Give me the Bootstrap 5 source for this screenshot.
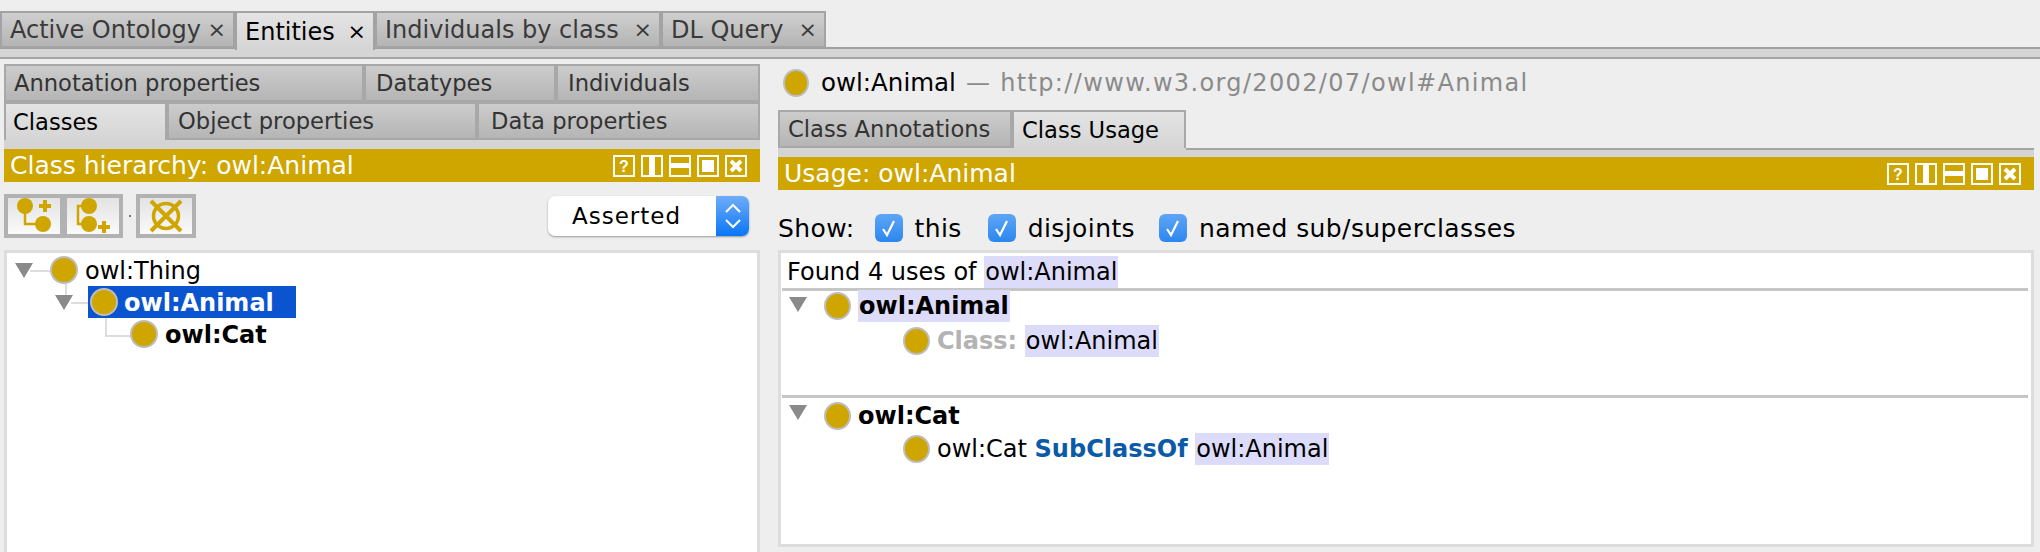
<!DOCTYPE html>
<html lang="en">
<head>
<meta charset="utf-8">
<title>Protege</title>
<link href="https://cdn.jsdelivr.net/npm/bootstrap@5.3.0/dist/css/bootstrap.min.css" rel="stylesheet">
<style>
html,body{height:552px;overflow:hidden}
body{background:#eee;font-family:"DejaVu Sans",sans-serif;color:#000;font-size:24px;line-height:1}
.app-top{padding-top:11px;height:59px;background:linear-gradient(#eee 47px,#a0a0a0 47px,#a0a0a0 49px,#d5d5d5 49px);border-bottom:2px solid #a5a5a5}
.app-tabs{height:37px}
.mtab{height:37px;border:2px solid #a3a3a3;background:linear-gradient(#cfcfcf,#b4b4b4);color:#3a3a3a;font-size:24px;padding-left:8px;display:flex;align-items:center;justify-content:space-between;padding-right:7px;position:relative;white-space:nowrap}
.mtab.on{background:linear-gradient(#e4e4e4,#d5d5d5);color:#000;border-bottom:0;height:39px}
.mtab span.xx{font-size:22px}
.w1{width:235px}.w2{width:140px}.w3{width:286px}.w4{width:165px}
.main-cols{padding:0 6px 0 4px;height:493px}
.left-pane{width:756px;padding-top:5px}
.right-pane{width:1256px;margin-left:18px}
.subrow{height:38px}
.stab{height:38px;border:2px solid #a8a8a8;background:linear-gradient(#cccccc,#b5b5b5);color:#333;font-size:22.6px;padding-left:8px;display:flex;align-items:center;white-space:nowrap}
.stab.on{background:linear-gradient(#e4e4e4,#d5d5d5);color:#000;border-bottom:0}
.s1{width:360px}.s2{width:192px;padding-left:10px}.s3{width:204px;padding-left:10px}.s4{width:163px;padding-left:7px}.s5{width:310px;padding-left:9px}.s6{width:283px;padding-left:12px}
.gap-band{height:9px;background:#d4d4d4}
.gold-bar{height:33px;background:#cfa500;color:#fff;font-size:25px;padding:0 13px 0 6px}
.tool-row{height:68px;padding:0 11px 0 0}
.tbtn{width:60px;height:44px;border:4px solid #b2b2b2;background:linear-gradient(#e3e3e3,#fafafa);display:flex;align-items:center;justify-content:center;padding:0}
.tbtn+.tbtn{margin-left:-1px}
.tdot{width:2px;height:2px;background:#777;margin:0 5px 0 6px;display:block}
.asserted{width:201px;height:40px;background:#fff;border-radius:7px;box-shadow:0 1px 2px #999;overflow:hidden;font-size:23px;letter-spacing:1px}
.asserted-txt{flex:1;text-align:center;padding-right:11px}
.stepper{width:33px;height:40px;background:linear-gradient(#6fadf8,#0a76f7)}
.box{background:#fff;border:3px solid #ddd;border-bottom:0}
.tree-box{height:302px;position:relative}
.tnode{position:absolute;display:flex;align-items:center}
.owl{width:28px;height:28px;border-radius:50%;background:#cfa500;border:2px solid #bdbdbd;flex:none;display:block}
.tri{width:0;height:0;border-left:9px solid transparent;border-right:9px solid transparent;border-top:15px solid #8a8a8a;position:absolute;display:block}
.wire{position:absolute;background:#ddd;display:block}
.lbl{margin-left:7px;white-space:nowrap;padding-top:2px}
.sel{background:#0b54d0;color:#fff}
.sel .lbl{margin-left:6px}
.b{font-weight:700}
.entity-head{height:51px;padding-bottom:3px;font-size:24.5px}
.entity-head .owl{width:26px;height:28px;margin-left:5px;margin-right:12px}
.muted-iri{color:#8a8a8a;letter-spacing:1.35px;font-size:24px;margin-left:10px}
.rtabs{height:38px}
.r1{width:234px}.r2{width:174px}
.rline{flex:1;border-bottom:2px solid #a5a5a5;height:40px}
.show-row{height:60px;font-size:25px;padding-top:16px;letter-spacing:.4px}
.chk{width:28px;height:28px;border-radius:6px;background:linear-gradient(#5ea6f5,#2d86ee);display:flex;align-items:center;justify-content:center;flex:none}
.chk-a{margin-left:20px}.chk-b{margin-left:26px}.chk-c{margin-left:24px}
.chk-t{margin-left:12px}
.use-box{height:297px;border-bottom:3px solid #ddd;position:relative;font-size:24px}
.hl{background:#dcdcfa;display:inline-block;height:32px;line-height:32px;padding:0 1px}
.rule{position:absolute;left:1px;right:3px;height:3px;background:#c6c6c6;display:block}
.rn{position:absolute;display:flex;align-items:center;height:32px;white-space:nowrap}
.rn .owl{margin-right:7px;width:27px}
.kw{color:#0a5aa8;font-weight:700}
.gry{color:#b3b3b3;font-weight:700}
</style>
</head>
<body>
<div class="app-top">
  <div class="d-flex app-tabs">
    <div class="mtab w1"><span>Active Ontology</span><span class="xx">×</span></div>
    <div class="mtab w2 on"><span>Entities</span><span class="xx">×</span></div>
    <div class="mtab w3"><span>Individuals by class</span><span class="xx">×</span></div>
    <div class="mtab w4"><span>DL Query</span><span class="xx">×</span></div>
  </div>
</div>
<div class="d-flex main-cols">
  <div class="left-pane">
    <div class="d-flex subrow"><div class="stab s1">Annotation properties</div><div class="stab s2">Datatypes</div><div class="stab s3">Individuals</div></div>
    <div class="d-flex subrow"><div class="stab s4 on">Classes</div><div class="stab s5">Object properties</div><div class="stab s6">Data properties</div></div>
    <div class="gap-band"></div>
    <div class="gold-bar d-flex align-items-center justify-content-between"><span>Class hierarchy: owl:Animal</span>
      <svg width="134" height="22" viewBox="0 0 134 22" fill="none" stroke="#fff" stroke-width="2"><rect x="1" y="1" width="20" height="20"/><text x="11" y="17" text-anchor="middle" fill="#fff" stroke="none" font-size="16" font-weight="700" font-family="Liberation Sans">?</text><rect x="29" y="1" width="20" height="20"/><rect x="36" y="1" width="6" height="20" fill="#fff" stroke="none"/><rect x="57" y="1" width="20" height="20"/><rect x="57" y="8" width="20" height="5" fill="#fff" stroke="none"/><rect x="85" y="1" width="20" height="20"/><rect x="89" y="5" width="12" height="12" fill="#fff" stroke="none"/><rect x="113" y="1" width="20" height="20"/><path d="M118 6l10 10M128 6l-10 10" stroke-width="4"/></svg>
    </div>
    <div class="tool-row d-flex align-items-center justify-content-between">
      <div class="d-flex align-items-center">
        <button class="tbtn" type="button" aria-label="Add subclass"><svg width="36" height="36" viewBox="0 0 36 36"><path d="M9 14V26H24" fill="none" stroke="#cfa500" stroke-width="2.5"/><circle cx="9" cy="8" r="8" fill="#cfa500"/><circle cx="27" cy="26" r="8" fill="#cfa500"/><path d="M23 8h12M29 2v12" stroke="#cfa500" stroke-width="4"/></svg></button>
        <button class="tbtn" type="button" aria-label="Add sibling"><svg width="36" height="36" viewBox="0 0 36 36"><path d="M10 8H3V26H10" fill="none" stroke="#cfa500" stroke-width="2.5"/><circle cx="14" cy="8" r="8" fill="#cfa500"/><circle cx="14" cy="26" r="8" fill="#cfa500"/><path d="M23 29h12M29 23v12" stroke="#cfa500" stroke-width="4"/></svg></button>
        <span class="tdot"></span>
        <button class="tbtn" type="button" aria-label="Delete"><svg width="36" height="36" viewBox="0 0 36 36"><circle cx="18" cy="18" r="12.5" fill="none" stroke="#cfa500" stroke-width="3.5"/><path d="M3 3l30 30M33 3L3 33" stroke="#cfa500" stroke-width="4"/></svg></button>
      </div>
      <div class="asserted d-flex align-items-center"><span class="asserted-txt">Asserted</span><span class="stepper d-flex align-items-center justify-content-center"><svg width="18" height="30" viewBox="0 0 18 30" fill="none" stroke="#fff" stroke-width="2"><path d="M2 11l7-7 7 7M2 19l7 7 7-7"/></svg></span></div>
    </div>
    <div class="box tree-box">
      <span class="wire" style="left:23px;top:17px;height:2px;width:22px"></span>
      <span class="wire" style="left:58px;top:30px;height:14px;width:2px"></span>
      <span class="wire" style="left:64px;top:49px;height:2px;width:22px"></span>
      <span class="wire" style="left:98px;top:62px;height:22px;width:2px"></span>
      <span class="wire" style="left:98px;top:82px;height:2px;width:26px"></span>
      <span class="tri" style="left:8px;top:10px"></span>
      <span class="tri" style="left:48px;top:42px"></span>
      <div class="tnode" style="left:43px;top:3px"><span class="owl"></span><span class="lbl">owl:Thing</span></div>
      <div class="tnode sel b" style="left:81px;top:33px;width:208px;height:32px;padding-left:2px"><span class="owl"></span><span class="lbl">owl:Animal</span></div>
      <div class="tnode b" style="left:123px;top:67px"><span class="owl"></span><span class="lbl">owl:Cat</span></div>
    </div>
  </div>
  <div class="right-pane">
    <div class="entity-head d-flex align-items-center"><span class="owl"></span><span>owl:Animal</span><span class="muted-iri">— http://www.w3.org/2002/07/owl#Animal</span></div>
    <div class="d-flex rtabs"><div class="stab r1">Class Annotations</div><div class="stab r2 on">Class Usage</div><div class="rline"></div></div>
    <div class="gap-band"></div>
    <div class="gold-bar d-flex align-items-center justify-content-between"><span>Usage: owl:Animal</span>
      <svg width="134" height="22" viewBox="0 0 134 22" fill="none" stroke="#fff" stroke-width="2"><rect x="1" y="1" width="20" height="20"/><text x="11" y="17" text-anchor="middle" fill="#fff" stroke="none" font-size="16" font-weight="700" font-family="Liberation Sans">?</text><rect x="29" y="1" width="20" height="20"/><rect x="36" y="1" width="6" height="20" fill="#fff" stroke="none"/><rect x="57" y="1" width="20" height="20"/><rect x="57" y="8" width="20" height="5" fill="#fff" stroke="none"/><rect x="85" y="1" width="20" height="20"/><rect x="89" y="5" width="12" height="12" fill="#fff" stroke="none"/><rect x="113" y="1" width="20" height="20"/><path d="M118 6l10 10M128 6l-10 10" stroke-width="4"/></svg>
    </div>
    <div class="show-row d-flex align-items-center">
      <span>Show:</span>
      <span class="chk chk-a"><svg width="18" height="20" viewBox="0 0 18 20" fill="none" stroke="#fff" stroke-width="2.2"><path d="M3 11l4 6L14 3"/></svg></span><span class="chk-t">this</span>
      <span class="chk chk-b"><svg width="18" height="20" viewBox="0 0 18 20" fill="none" stroke="#fff" stroke-width="2.2"><path d="M3 11l4 6L14 3"/></svg></span><span class="chk-t">disjoints</span>
      <span class="chk chk-c"><svg width="18" height="20" viewBox="0 0 18 20" fill="none" stroke="#fff" stroke-width="2.2"><path d="M3 11l4 6L14 3"/></svg></span><span class="chk-t">named sub/superclasses</span>
    </div>
    <div class="box use-box">
      <div class="rn" style="left:6px;top:3px">Found 4 uses of&nbsp;<span class="hl">owl:Animal</span></div>
      <span class="rule" style="top:35px"></span>
      <span class="tri" style="left:8px;top:44px"></span>
      <div class="rn" style="left:43px;top:37px"><span class="owl"></span><span class="hl b">owl:Animal</span></div>
      <div class="rn" style="left:122px;top:72px"><span class="owl"></span><span class="gry">Class:</span>&nbsp;<span class="hl">owl:Animal</span></div>
      <span class="rule" style="top:142px"></span>
      <span class="tri" style="left:8px;top:152px"></span>
      <div class="rn" style="left:43px;top:147px"><span class="owl"></span><span class="b">owl:Cat</span></div>
      <div class="rn" style="left:122px;top:180px"><span class="owl"></span><span>owl:Cat&nbsp;</span><span class="kw">SubClassOf</span>&nbsp;<span class="hl">owl:Animal</span></div>
    </div>
  </div>
</div>
<script src="https://cdn.jsdelivr.net/npm/bootstrap@5.3.0/dist/js/bootstrap.bundle.min.js"></script>
</body>
</html>
